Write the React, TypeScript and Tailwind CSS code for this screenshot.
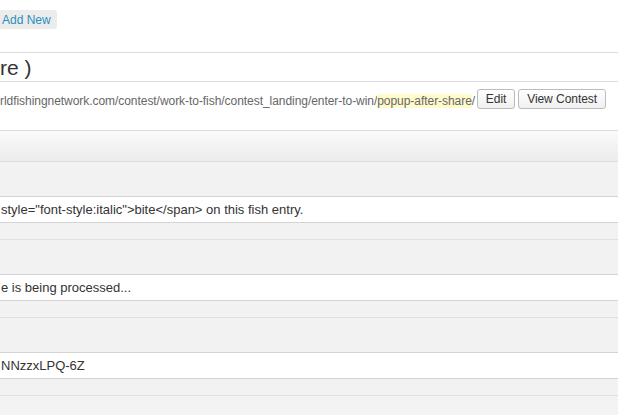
import React from 'react';

const fields = [
  { value: 'style="font-style:italic">bite</span> on this fish entry.' },
  { value: 'e is being processed...' },
  { value: 'NNzzxLPQ-6Z' },
];

export default function App() {
  return (
    <div className="w-[618px] h-[415px] overflow-hidden bg-white font-['Liberation_Sans',Arial,sans-serif] flex flex-col">
      <div className="pt-[10px]">
        <span className="flex items-center h-[19px] w-[57px] bg-[#ececec] rounded-r-[3px] pl-[2px] text-[12px] text-[#2a8fbd]">
          Add New
        </span>
      </div>

      <div className="mt-[23px] h-[30px] border-y border-[#dcdcdc] flex items-center text-[21px] text-[#333] leading-none">
        re )
      </div>

      <div className="h-[48px] flex items-start pt-[7px] text-[12px] tracking-[-0.05px] text-[#666]">
        <span className="mt-[3px] whitespace-nowrap">
          rldfishingnetwork.com/contest/work-to-fish/contest_landing/enter-to-win/
          <span className="bg-[#fffbcc]">popup-after-share</span>/
        </span>
        <button className="ml-[2px] h-[20px] w-[38px] border border-[#bbb] rounded-[3px] bg-gradient-to-b from-white to-[#f0f0f0] text-[12px] text-[#333]">
          Edit
        </button>
        <button className="ml-[3px] h-[20px] w-[88px] border border-[#bbb] rounded-[3px] bg-gradient-to-b from-white to-[#f0f0f0] text-[12px] text-[#333]">
          View Contest
        </button>
      </div>

      <div className="flex-1 border-t border-[#dcdcdc] bg-[#f2f2f2] flex flex-col">
        <div className="h-[31px] border-b border-[#dcdcdc] bg-gradient-to-b from-[#fafafa] to-[#ececec]" />
        {fields.map((f, i) => (
          <div key={i} className="pt-[34px] pb-[16px] border-b border-[#e0e0e0] bg-[#f2f2f2]">
            <div className="h-[27px] border-y border-[#d3d3d3] bg-white flex items-center pl-[1px] text-[13px] text-[#333] whitespace-nowrap">
              {f.value}
            </div>
          </div>
        ))}
        <div className="flex-1 bg-[#f3f3f3]" />
      </div>
    </div>
  );
}
